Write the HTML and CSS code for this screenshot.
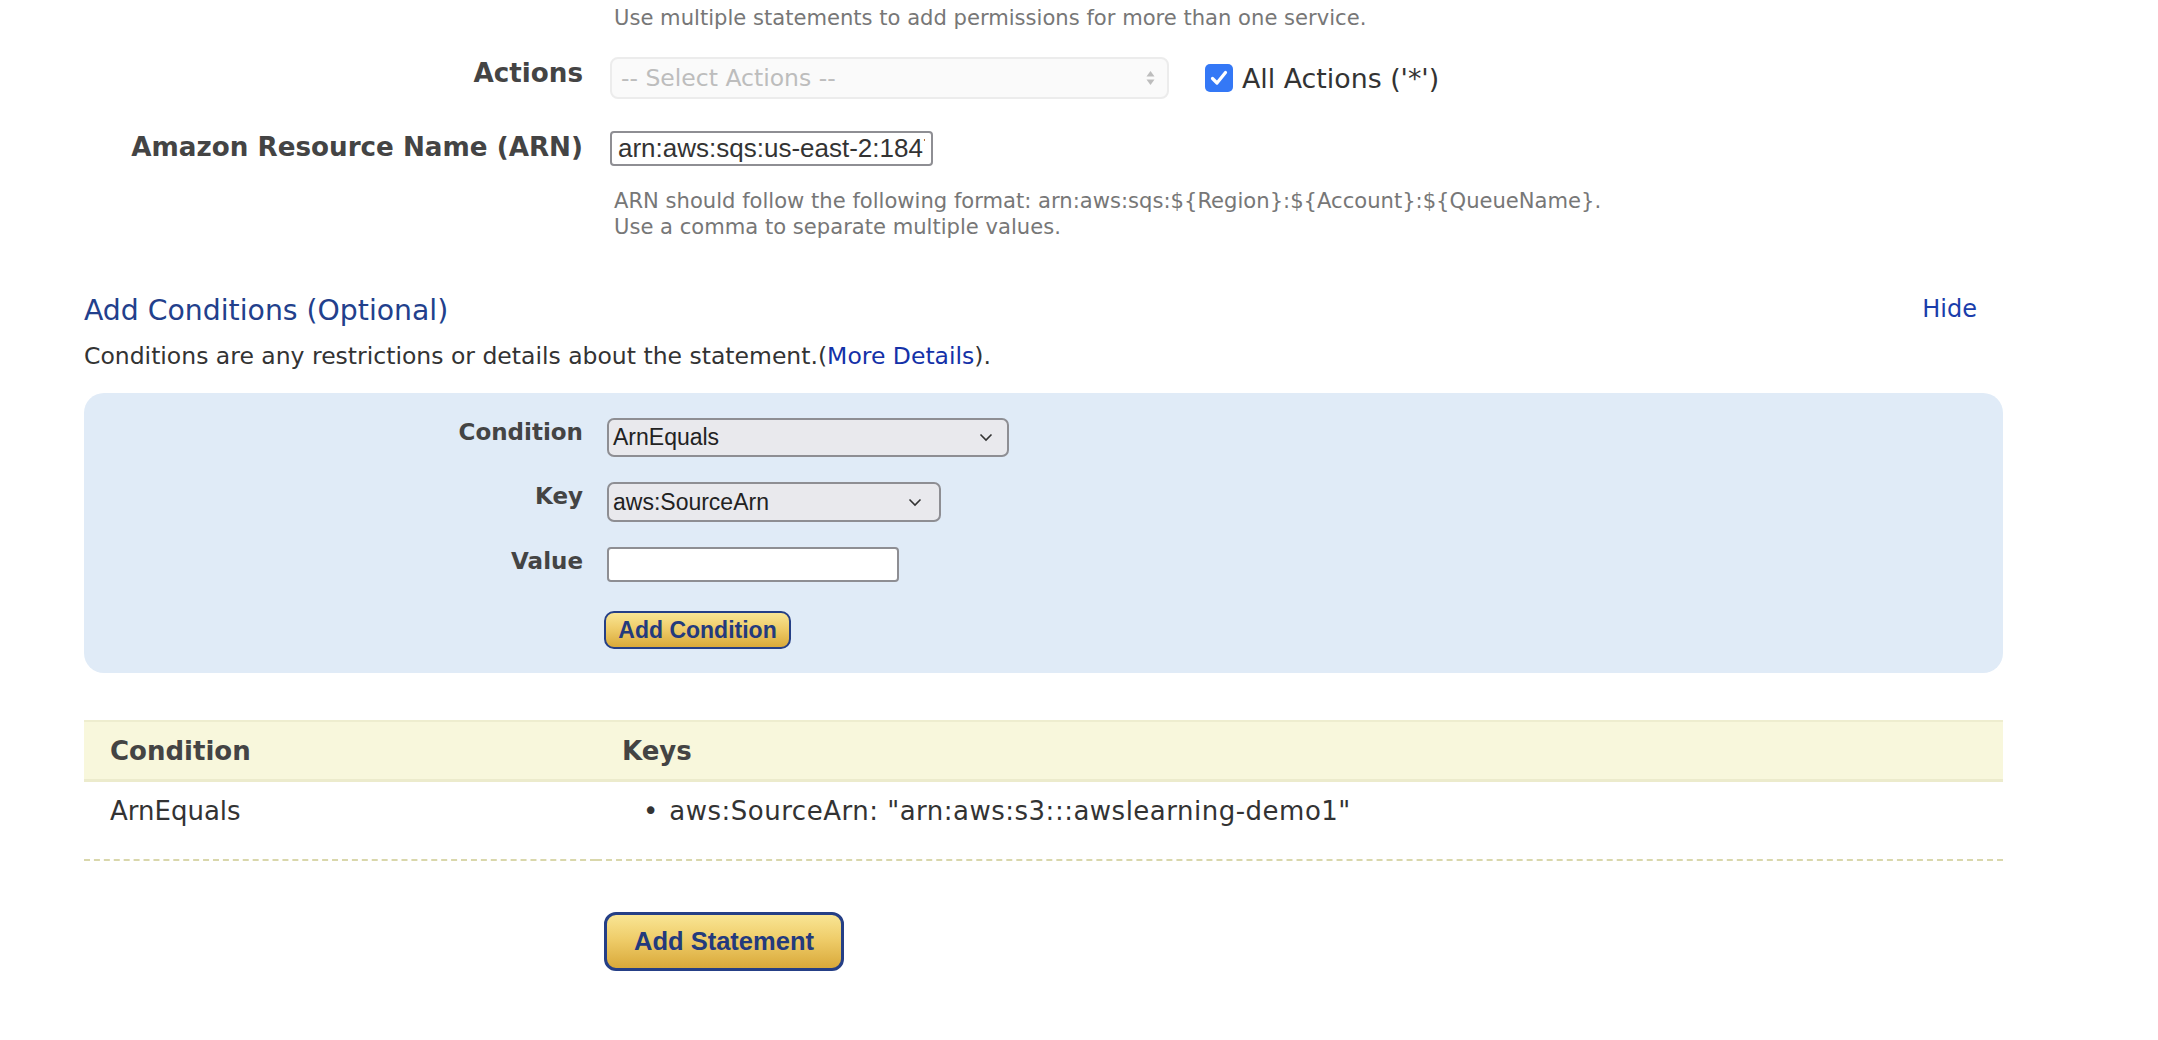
FILE: index.html
```html
<!DOCTYPE html>
<html>
<head>
<meta charset="utf-8">
<title>Policy Generator</title>
<link rel="stylesheet" href="styles.css">
</head>
<body>
<div class="page">
  <div class="row help-top">
    <div class="lbl"></div>
    <div class="field help">Use multiple statements to add permissions for more than one service.</div>
  </div>

  <div class="row actions-row">
    <div class="lbl">Actions</div>
    <div class="field actions-field">
      <div class="select-disabled">
        <span class="placeholder">-- Select Actions --</span>
        <svg class="updown" width="9" height="16" viewBox="0 0 9 16"><path d="M4.5 1 L8.5 6.5 L0.5 6.5 Z" fill="#bdbdbd"/><path d="M4.5 15 L8.5 9.5 L0.5 9.5 Z" fill="#bdbdbd"/></svg>
      </div>
      <label class="check-label">
        <span class="checkbox"><svg width="28" height="28" viewBox="0 0 28 28"><path d="M7.5 14.5 L12 19 L20.5 8.5" fill="none" stroke="#fff" stroke-width="3.2" stroke-linecap="round" stroke-linejoin="round"/></svg></span>
        <span class="check-text">All Actions ('*')</span>
      </label>
    </div>
  </div>

  <div class="row arn-row">
    <div class="lbl">Amazon Resource Name (ARN)</div>
    <div class="field">
      <input class="text-input arn-input" type="text" value="arn:aws:sqs:us-east-2:184738291045:queue">
    </div>
  </div>

  <div class="row arn-help">
    <div class="lbl"></div>
    <div class="field help">ARN should follow the following format: arn:aws:sqs:${Region}:${Account}:${QueueName}.<br>Use a comma to separate multiple values.</div>
  </div>

  <div class="cond-head">
    <h2 class="cond-title">Add Conditions (Optional)</h2>
    <a class="hide-link">Hide</a>
  </div>
  <p class="cond-desc">Conditions are any restrictions or details about the statement.(<a class="link">More Details</a>).</p>

  <div class="panel">
    <div class="row prow">
      <div class="lbl plbl">Condition</div>
      <div class="field">
        <div class="select cond-select"><span>ArnEquals</span><svg width="14" height="9" viewBox="0 0 14 9"><path d="M1.5 1.5 L7 7 L12.5 1.5" fill="none" stroke="#333" stroke-width="1.6"/></svg></div>
      </div>
    </div>
    <div class="row prow">
      <div class="lbl plbl">Key</div>
      <div class="field">
        <div class="select key-select"><span>aws:SourceArn</span><svg width="14" height="9" viewBox="0 0 14 9"><path d="M1.5 1.5 L7 7 L12.5 1.5" fill="none" stroke="#333" stroke-width="1.6"/></svg></div>
      </div>
    </div>
    <div class="row prow">
      <div class="lbl plbl">Value</div>
      <div class="field">
        <input class="text-input value-input" type="text" value="">
      </div>
    </div>
    <div class="row prow btn-row">
      <div class="lbl"></div>
      <div class="field"><button class="gold-btn small-btn">Add Condition</button></div>
    </div>
  </div>

  <table class="cond-table">
    <thead>
      <tr><th class="c1">Condition</th><th>Keys</th></tr>
    </thead>
    <tbody>
      <tr>
        <td class="c1">ArnEquals</td>
        <td><div class="key-item"><span class="bullet">•</span><span class="key-text">aws:SourceArn: "arn:aws:s3:::awslearning-demo1"</span></div></td>
      </tr>
    </tbody>
  </table>

  <div class="row stmt-row">
    <div class="lbl"></div>
    <div class="field"><button class="gold-btn big-btn">Add Statement</button></div>
  </div>
</div>
</body>
</html>
```

FILE: styles.css
```css
html, body {
  margin: 0;
  padding: 0;
  background: #ffffff;
}
body {
  font-family: "DejaVu Sans", Verdana, sans-serif;
  color: #333;
}
.page {
  padding: 5px 155px 0 84px;
}
.row {
  display: flex;
  gap: 27px;
}
.lbl {
  width: 499px;
  flex: none;
  text-align: right;
  font-weight: bold;
  font-size: 26.2px;
  line-height: 32px;
  color: #444;
}
.field {
  flex: 1;
  min-width: 0;
}
.help {
  font-size: 21.1px;
  line-height: 26px;
  color: #777;
  padding-left: 4px;
}
.actions-row {
  margin-top: 26px;
}
.actions-field {
  display: flex;
  align-items: center;
  gap: 36px;
}
.select-disabled {
  box-sizing: border-box;
  width: 559px;
  height: 42px;
  border: 2px solid #ececec;
  border-radius: 8px;
  background: #fafafa;
  display: flex;
  align-items: center;
  justify-content: space-between;
  padding: 0 12px 0 9px;
}
.placeholder {
  font-size: 23.5px;
  color: #bdbdbd;
}
.check-label {
  display: flex;
  align-items: center;
  gap: 9px;
}
.checkbox {
  width: 28px;
  height: 28px;
  border-radius: 5px;
  background: #3478f6;
  display: block;
}
.checkbox svg {
  display: block;
}
.check-text {
  font-size: 26.8px;
  color: #333;
}
.arn-row {
  margin-top: 32px;
}
.text-input {
  box-sizing: border-box;
  border: 2px solid #8e8e93;
  border-radius: 4px;
  background: #fff;
  font-family: "Liberation Sans", Arial, sans-serif;
  color: #333;
  margin: 0;
  outline: none;
  display: block;
}
.arn-input {
  width: 323px;
  height: 35px;
  font-size: 26px;
  padding: 0 6px;
}
.arn-help {
  margin-top: 22px;
}
.cond-head {
  margin-top: 54px;
  display: flex;
  justify-content: space-between;
  align-items: center;
}
.cond-title {
  margin: 0;
  font-weight: normal;
  font-size: 28.3px;
  line-height: 34px;
  color: #22408c;
}
.hide-link {
  font-size: 24px;
  color: #1a3dab;
  margin-right: 26px;
  margin-bottom: 4px;
}
.cond-desc {
  margin: 13px 0 0 0;
  font-size: 23.5px;
  line-height: 30px;
  color: #333;
}
.link {
  color: #1431a8;
}
.panel {
  margin-top: 22px;
  background: #e0ebf7;
  border-radius: 20px;
  padding: 25px 0 24px 0;
}
.prow {
  gap: 24px;
  align-items: flex-start;
}
.prow + .prow {
  margin-top: 25px;
}
.plbl {
  font-size: 23px;
  line-height: 28px;
}
.select {
  box-sizing: border-box;
  height: 39px;
  border: 2px solid #8e8e93;
  border-radius: 7px;
  background: #e9e9ed;
  display: flex;
  align-items: center;
  justify-content: space-between;
  padding: 0 14px 0 4px;
  font-family: "Liberation Sans", Arial, sans-serif;
  font-size: 23px;
  color: #222;
}
.select svg {
  display: block;
}
.cond-select {
  width: 402px;
}
.key-select {
  width: 334px;
  height: 40px;
  padding-right: 17px;
}
.value-input {
  width: 292px;
  height: 35px;
  font-size: 23px;
}
.prow.btn-row {
  margin-top: 29px;
  gap: 21px;
}
.gold-btn {
  display: block;
  margin: 0;
  font-family: "Liberation Sans", Arial, sans-serif;
  font-weight: bold;
  color: #233a7d;
  background: linear-gradient(to bottom, #f9e594 0%, #efcd6a 45%, #d9a93a 100%);
  border-style: solid;
  border-color: #253f86;
  cursor: pointer;
}
.small-btn {
  width: 187px;
  height: 38px;
  border-width: 2px;
  border-radius: 10px;
  font-size: 23px;
  padding: 0;
}
.cond-table {
  margin-top: 47px;
  width: 100%;
  border-collapse: collapse;
  font-size: 26px;
}
.cond-table th {
  background: #f8f7dc;
  border-top: 2px solid #eeedcf;
  border-bottom: 3px solid #ecebcc;
  text-align: left;
  font-weight: bold;
  color: #444;
  height: 57px;
  padding: 0 0 0 26px;
  line-height: 32px;
}
.cond-table th.c1,
.cond-table td.c1 {
  width: 486px;
}
.cond-table td {
  vertical-align: top;
  padding: 13px 0 32px 26px;
  line-height: 32px;
  color: #333;
  border-bottom: 2px dashed #d9d7ab;
}
.key-item {
  display: flex;
  gap: 11px;
  padding-left: 21px;
}
.bullet {
  font-size: 26px;
}
.key-text {
  letter-spacing: 0.5px;
}
.stmt-row {
  margin-top: 51px;
  gap: 21px;
}
.big-btn {
  width: 240px;
  height: 59px;
  border-width: 3px;
  border-radius: 12px;
  font-size: 25.5px;
  padding: 0;
}
```
